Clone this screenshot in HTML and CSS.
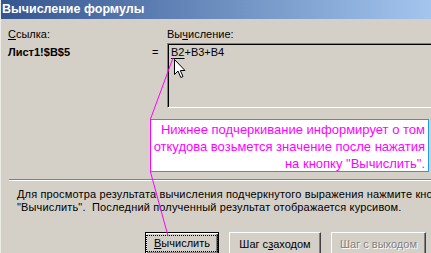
FILE: index.html
```html
<!DOCTYPE html>
<html lang="ru">
<head>
<meta charset="utf-8">
<title>Вычисление формулы</title>
<link rel="stylesheet" href="styles.css">
</head>
<body>
<div class="window">
  <div class="titlebar">Вычисление формулы</div>
  <div class="content">
    <div class="fields">
      <div class="col-ref">
        <div class="label"><u>С</u>сылка:</div>
        <div class="ref">Лист1!$B$5</div>
      </div>
      <div class="col-eq">=</div>
      <div class="col-eval">
        <div class="label">Вы<u>ч</u>исление:</div>
        <div class="evalbox"><span class="under">B2</span>+B3+B4</div>
      </div>
    </div>
    <div class="separator"></div>
    <div class="info">
      <div>Для просмотра результата вычисления подчеркнутого выражения нажмите кнопку</div>
      <div>"Вычислить".&nbsp; Последний полученный результат отображается курсивом.</div>
    </div>
    <div class="buttons">
      <div class="btn default"><span class="focus"><u>В</u>ычислить</span></div>
      <div class="btn step-in">Шаг с <u>з</u>аходом</div>
      <div class="btn step-out disabled">Шаг с выходом</div>
    </div>
  </div>

  <div class="callout">
    <div>Нижнее подчеркивание информирует о том</div>
    <div>откудова возьмется значение после нажатия</div>
    <div>на кнопку "Вычислить".</div>
  </div>

  <svg class="pointer" width="431" height="253" viewBox="0 0 431 253">
    <polyline points="172,58 149.5,119 149.5,172 167,236" fill="none" stroke="#ff00ff" stroke-width="1"/>
  </svg>

  <svg class="cursor" width="13" height="20" viewBox="0 0 13 20">
    <path d="M0.5 0.5 L0.5 15.5 L4 12 L6.8 18.5 L9 17.5 L6.3 11.5 L11 11.5 Z" fill="#fff" stroke="#000" stroke-width="1" stroke-linejoin="miter"/>
  </svg>
</div>
</body>
</html>
```
FILE: styles.css
```css
* { box-sizing: border-box; }
html, body { margin: 0; padding: 0; }
body {
  width: 431px;
  height: 253px;
  overflow: hidden;
  background: #d4d0c8;
  font-family: "Liberation Sans", Tahoma, sans-serif;
  font-size: 11px;
  color: #000;
}
.window {
  position: relative;
  width: 431px;
  height: 253px;
  border-left: 1px solid #ecebe6;
  overflow: hidden;
}
.titlebar {
  height: 19px;
  background: linear-gradient(to right, #34558f, #a3c5ee);
  color: #fff;
  font-weight: bold;
  font-size: 12.5px;
  line-height: 19px;
  padding-left: 1px;
}
.content {
  padding: 9px 0 0 7px;
}
.fields {
  display: flex;
  height: 151px;
}
.label { line-height: 13px; height: 15px; }
.col-ref { width: 144px; flex-shrink: 0; }
.ref { font-weight: bold; margin-top: 3px; }
.col-eq { width: 14px; flex-shrink: 0; padding-top: 18px; }
.col-eval { flex: 1; min-width: 0; padding-left: 1px; }
.evalbox {
  width: 300px;
  height: 65px;
  border: 1px solid;
  border-color: #808080 #ffffff #ffffff #808080;
  box-shadow: inset 1px 1px 0 #000;
  padding: 2px 0 0 3px;
  line-height: 13px;
}
.under { text-decoration: underline; text-underline-offset: 2px; }
.separator {
  margin-left: 1px;
  height: 2px;
  border-top: 1px solid #808080;
  border-bottom: 1px solid #ffffff;
}
.info {
  margin-top: 7px;
  padding-left: 9px;
  white-space: nowrap;
  line-height: 13px;
  letter-spacing: 0.15px;
}
.buttons {
  display: flex;
  margin-top: 18px;
  margin-left: 137px;
  gap: 10px;
}
.btn {
  flex-shrink: 0;
  height: 23px;
  display: flex;
  align-items: center;
  justify-content: center;
  border: 1px solid;
  border-color: #ffffff #404040 #404040 #ffffff;
  box-shadow: inset -1px -1px 0 #808080;
  white-space: nowrap;
}
.btn.default {
  width: 74px;
  border: 1px solid #000;
  box-shadow: inset 1px 1px 0 #fff, inset -1px -1px 0 #404040, inset -2px -2px 0 #808080;
}
.focus {
  border: 1px dotted #000;
  padding: 1px 7px 1px 7px;
  line-height: 13px;
}
.step-in { width: 92px; }
.step-out { width: 95px; }
.disabled { color: #808080; text-shadow: 1px 1px 0 #fff; }
.callout {
  position: absolute;
  left: 149px;
  top: 119px;
  width: 279px;
  height: 53px;
  background: #fff;
  border: 1px solid #1d9de2;
  color: #ff00ff;
  font-size: 13px;
  line-height: 17px;
  text-align: right;
  padding: 1px 3px 0 0;
  white-space: nowrap;
}
.pointer {
  position: absolute;
  left: 0;
  top: 0;
}
.cursor {
  position: absolute;
  left: 173px;
  top: 59px;
}
```
